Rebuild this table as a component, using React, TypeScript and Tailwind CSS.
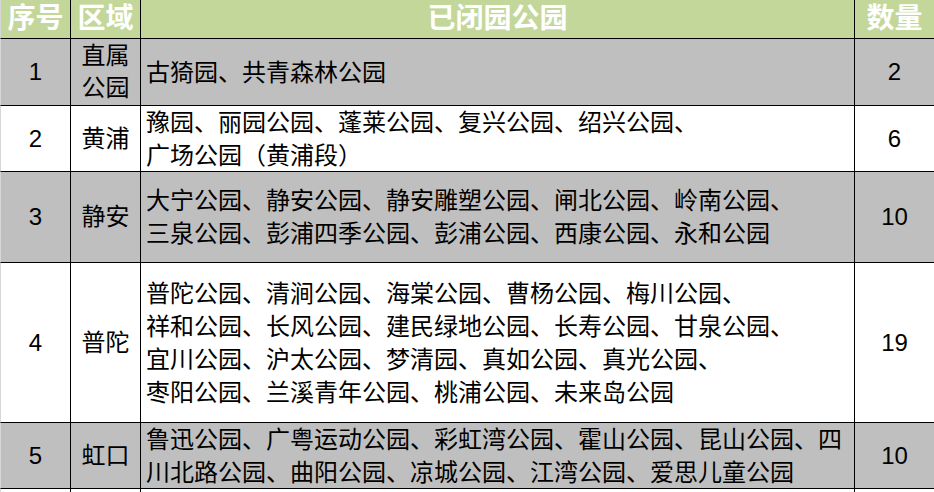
import React from "react";

type Row = { no: string; area: string[]; parks: string[]; count: string; gray: boolean; h: string };

const rows: Row[] = [
  { no: "1", area: ["直属", "公园"], parks: ["古猗园、共青森林公园"], count: "2", gray: true, h: "h-[67px]" },
  { no: "2", area: ["黄浦"], parks: ["豫园、丽园公园、蓬莱公园、复兴公园、绍兴公园、", "广场公园（黄浦段）"], count: "6", gray: false, h: "h-[66px]" },
  {
    no: "3",
    area: ["静安"],
    parks: ["大宁公园、静安公园、静安雕塑公园、闸北公园、岭南公园、", "三泉公园、彭浦四季公园、彭浦公园、西康公园、永和公园"],
    count: "10",
    gray: true,
    h: "h-[91px]",
  },
  {
    no: "4",
    area: ["普陀"],
    parks: [
      "普陀公园、清涧公园、海棠公园、曹杨公园、梅川公园、",
      "祥和公园、长风公园、建民绿地公园、长寿公园、甘泉公园、",
      "宜川公园、沪太公园、梦清园、真如公园、真光公园、",
      "枣阳公园、兰溪青年公园、桃浦公园、未来岛公园",
    ],
    count: "19",
    gray: false,
    h: "h-[160px]",
  },
  {
    no: "5",
    area: ["虹口"],
    parks: ["鲁迅公园、广粤运动公园、彩虹湾公园、霍山公园、昆山公园、四", "川北路公园、曲阳公园、凉城公园、江湾公园、爱思儿童公园"],
    count: "10",
    gray: true,
    h: "h-[66px]",
  },
];

const font = "font-['Liberation_Sans','Noto_Sans_CJK_SC',sans-serif]";

export default function App() {
  return (
    <div className={`w-[934px] h-[492px] overflow-hidden bg-white text-black ${font}`}>
      <div className="grid grid-cols-[71px_70px_714px_79px]">
        {/* header */}
        <div className="h-[39px] bg-[#c4d79b] border-l border-l-[#d6d6d6] border-r border-b border-r-black border-b-black flex items-center justify-center text-white font-bold text-[28px] leading-none">
          序号
        </div>
        <div className="h-[39px] bg-[#c4d79b] border-r border-b border-black flex items-center justify-center text-white font-bold text-[28px] leading-none">
          区域
        </div>
        <div className="h-[39px] bg-[#c4d79b] border-r border-b border-black flex items-center justify-center text-white font-bold text-[28px] leading-none">
          已闭园公园
        </div>
        <div className="h-[39px] bg-[#c4d79b] border-b border-black flex items-center justify-center text-white font-bold text-[28px] leading-none">
          数量
        </div>

        {rows.map((r) => {
          const bg = r.gray ? "bg-[#bfbfbf]" : "bg-white";
          return (
            <React.Fragment key={r.no}>
              <div className={`${r.h} ${bg} border-l border-l-[#d6d6d6] border-r border-b border-r-black border-b-black flex items-center justify-center text-[24px]`}>
                {r.no}
              </div>
              <div className={`${r.h} ${bg} border-r border-b border-black flex flex-col items-center justify-center text-[24px] leading-[32px]`}>
                {r.area.map((a) => (
                  <div key={a}>{a}</div>
                ))}
              </div>
              <div className={`${r.h} ${bg} border-r border-b border-black flex flex-col justify-center pl-[5px] text-[24px] leading-[33px] whitespace-nowrap`}>
                {r.parks.map((p) => (
                  <div key={p}>{p}</div>
                ))}
              </div>
              <div className={`${r.h} ${bg} border-b border-black flex items-center justify-center text-[24px]`}>
                {r.count}
              </div>
            </React.Fragment>
          );
        })}

        <div className="h-[20px] bg-white border-l border-l-[#d6d6d6] border-r border-r-black"></div>
        <div className="h-[20px] bg-white border-r border-black"></div>
        <div className="h-[20px] bg-white border-r border-black"></div>
        <div className="h-[20px] bg-white"></div>
      </div>
    </div>
  );
}
